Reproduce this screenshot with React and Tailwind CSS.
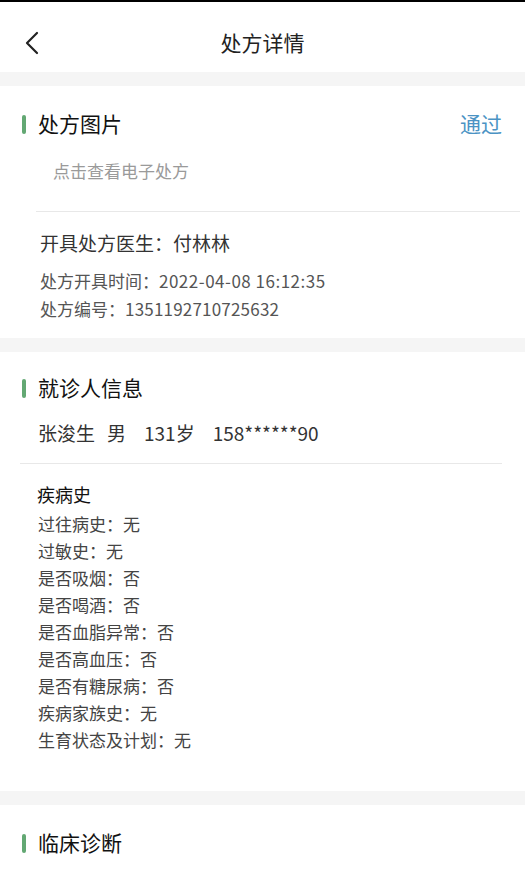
const font = { fontFamily: '"Noto Sans CJK SC", "Noto Sans", sans-serif' };

const SectionTitle = ({ children, right }) => (
  <div className="flex items-center justify-between pr-[23px]">
    <div className="flex items-center">
      <div className="ml-[22px] w-[4px] h-[19px] rounded-[2px] bg-[#63a873]"></div>
      <h2 className="ml-[12px] text-[21px] leading-[28px] text-[#111] -translate-y-[1px]">{children}</h2>
    </div>
    {right}
  </div>
);

const history = [
  ['过往病史', '无'],
  ['过敏史', '无'],
  ['是否吸烟', '否'],
  ['是否喝酒', '否'],
  ['是否血脂异常', '否'],
  ['是否高血压', '否'],
  ['是否有糖尿病', '否'],
  ['疾病家族史', '无'],
  ['生育状态及计划', '无'],
];

export default function App() {
  return (
    <div className="w-[525px] h-[873px] overflow-hidden bg-[#f5f5f5]" style={font}>
      <div className="h-[2px] bg-black"></div>

      {/* header */}
      <div className="relative h-[70px] bg-white flex justify-center pt-[26px]">
        <button className="absolute left-[22px] top-[26px] p-[3px]">
          <svg width="14" height="24" viewBox="0 0 14 24" fill="none">
            <path d="M12 2 L2 12 L12 22" stroke="#222" strokeWidth="2.2" strokeLinecap="round" strokeLinejoin="round" />
          </svg>
        </button>
        <h1 className="text-[21px] leading-[28px] text-[#222]">处方详情</h1>
      </div>

      {/* prescription card */}
      <div className="mt-[14px] bg-white pt-[24px] pb-[17px]">
        <SectionTitle right={<span className="text-[21px] leading-[28px] text-[#4b93c4] -translate-y-[1px]">通过</span>}>处方图片</SectionTitle>
        <p className="mt-[22px] pl-[53px] text-[17px] leading-[22px] text-[#9a9a9a]">点击查看电子处方</p>
        <div className="mt-[29px] ml-[36px] mr-[5px] h-px bg-[#e8e8e8]"></div>
        <p className="mt-[18px] pl-[40px] text-[19px] leading-[26px] text-[#333]">开具处方医生：付林林</p>
        <p className="mt-[13px] pl-[40px] text-[17px] leading-[24px] text-[#555]">
          处方开具时间：<span className="tracking-[0.5px]">2022-04-08 16:12:35</span>
        </p>
        <p className="mt-[4px] pl-[40px] text-[17px] leading-[24px] text-[#555]">
          处方编号：<span className="tracking-[0.2px]">1351192710725632</span>
        </p>
      </div>

      {/* patient card */}
      <div className="mt-[14px] bg-white pt-[22px] pb-[38px]">
        <SectionTitle>就诊人信息</SectionTitle>
        <p className="mt-[18px] pl-[38px] text-[19px] leading-[26px] text-[#333] flex">
          <span>张浚生</span>
          <span className="ml-[12px]">男</span>
          <span className="ml-[18px]">131岁</span>
          <span className="ml-[18px]">158******90</span>
        </p>
        <div className="mt-[17px] ml-[20px] mr-[23px] h-px bg-[#e8e8e8]"></div>
        <p className="mt-[18px] pl-[37px] text-[18px] leading-[24px] text-[#111]">疾病史</p>
        <ul className="mt-[4px] pl-[38px] text-[17px] leading-[27px] text-[#444]">
          {history.map(([k, v]) => (
            <li key={k}>{k}：{v}</li>
          ))}
        </ul>
      </div>

      {/* diagnosis card */}
      <div className="mt-[14px] bg-white pt-[24px] pb-[40px]">
        <SectionTitle>临床诊断</SectionTitle>
      </div>
    </div>
  );
}
